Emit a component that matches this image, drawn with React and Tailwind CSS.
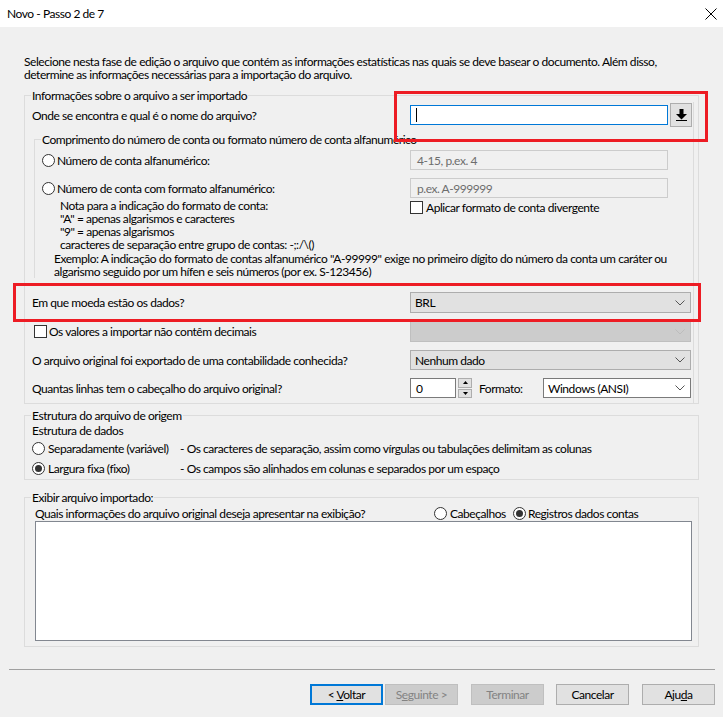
import React from 'react';

function Radio({ checked }) {
  return (
    <span className="w-[13px] h-[13px] shrink-0 rounded-full border border-[#333333] bg-white flex items-center justify-center">
      {checked && <span className="w-[7px] h-[7px] rounded-full bg-[#333333]" />}
    </span>
  );
}

function Checkbox() {
  return <span className="w-[13px] h-[13px] shrink-0 border border-[#333333] bg-white" />;
}

function Chevron({ light }) {
  return (
    <svg width="10" height="6" viewBox="0 0 10 6" className="shrink-0">
      <polyline points="0.5,0.5 5,5 9.5,0.5" fill="none" stroke={light ? '#bdbdbd' : '#555555'} strokeWidth="1" />
    </svg>
  );
}

function Combo({ text, variant, width = 'w-[281px]', height = 'h-[21px]' }) {
  // variant: normal | disabled | white
  const look =
    variant === 'disabled'
      ? 'bg-[#cccccc] border-[#bfbfbf]'
      : variant === 'white'
      ? 'bg-white border-[#7a7a7a]'
      : 'bg-[#e1e1e1] border-[#adadad]';
  return (
    <div className={`${width} ${height} ${look} border flex items-center justify-between pl-[4px] pr-[5px]`}>
      <span>{text}</span>
      <Chevron light={variant === 'disabled'} />
    </div>
  );
}

function Button({ children, kind }) {
  const look =
    kind === 'default'
      ? 'bg-[#e1e1e1] border-2 border-[#0078d7] text-black'
      : kind === 'disabled'
      ? 'bg-[#cccccc] border border-[#bfbfbf] text-[#838383]'
      : 'bg-[#e1e1e1] border border-[#adadad] text-black';
  return <div className={`w-[73px] h-[21px] flex items-center justify-center ${look}`}>{children}</div>;
}

export default function App() {
  return (
    <div className="relative w-[723px] h-[717px] overflow-hidden bg-[#f0f0f0] text-black text-[12px] leading-[13px] tracking-[-0.45px] font-['Lato',sans-serif]">
      {/* title bar */}
      <div className="h-[27px] bg-white flex items-center justify-between pl-[7px] pr-[6px]">
        <span>Novo - Passo 2 de 7</span>
        <svg width="12" height="12" viewBox="0 0 12 12">
          <path d="M0.5 0.5 L11.5 11.5 M11.5 0.5 L0.5 11.5" stroke="#000" strokeWidth="1" />
        </svg>
      </div>

      {/* intro */}
      <div className="mt-[28px] ml-[24px] whitespace-nowrap">
        <div>Selecione nesta fase de edição o arquivo que contém as informações estatísticas nas quais se deve basear o documento. Além disso,</div>
        <div>determine as informações necessárias para a importação do arquivo.</div>
      </div>

      {/* group 1 */}
      <fieldset className="mt-[8px] ml-[24px] w-[675px] border border-[#dcdcdc]">
        <legend className="ml-[6px] px-[1px]">Informações sobre o arquivo a ser importado</legend>
        <div className="w-[669px] border-r border-[#dcdcdc] pl-[7px] pb-[5px] flex flex-col whitespace-nowrap">
          <div className="mt-[1px] h-[24px] flex items-center">
            <span className="w-[378px]">Onde se encontra e qual é o nome do arquivo?</span>
            <div className="w-[258px] h-[20px] border border-[#0078d7] bg-white flex items-center pl-[5px]">
              <span className="w-px h-[14px] bg-black" />
            </div>
            <div className="ml-[2px] w-[22px] h-[24px] bg-[#e1e1e1] border border-[#adadad] flex items-center justify-center">
              <svg width="11" height="12" viewBox="0 0 11 12">
                <rect x="3.5" y="0" width="4" height="5" fill="#000" />
                <polygon points="0,5 11,5 5.5,10.5" fill="#000" />
                <rect x="0" y="11" width="11" height="1" fill="#000" />
              </svg>
            </div>
          </div>

          <fieldset className="mt-[6px] ml-[2px] w-[657px] border-t border-l border-[#dcdcdc]">
            <legend className="ml-[6px] px-[1px]">Comprimento do número de conta ou formato número de conta alfanumérico</legend>
            <div className="pl-[7px] flex flex-col">
              <div className="mt-[4px] h-[20px] flex items-center">
                <div className="w-[368px] flex items-center gap-[2px]">
                  <Radio />
                  <span>Número de conta alfanumérico:</span>
                </div>
                <div className="w-[258px] h-[20px] border border-[#cccccc] bg-[#f0f0f0] text-[#6d6d6d] flex items-center pl-[6px]">4-15, p.ex. 4</div>
              </div>
              <div className="mt-[8px] h-[20px] flex items-center">
                <div className="w-[368px] flex items-center gap-[2px]">
                  <Radio />
                  <span>Número de conta com formato alfanumérico:</span>
                </div>
                <div className="w-[258px] h-[20px] border border-[#cccccc] bg-[#f0f0f0] text-[#6d6d6d] flex items-center pl-[6px]">p.ex. A-999999</div>
              </div>
              <div className="flex">
                <div className="w-[368px] pl-[18px] pt-[1px]">
                  <div>Nota para a indicação do formato de conta:</div>
                  <div>"A" = apenas algarismos e caracteres</div>
                  <div>"9" = apenas algarismos</div>
                  <div>caracteres de separação entre grupo de contas: -;:/\()</div>
                </div>
                <div className="mt-[3px] h-[13px] flex items-center gap-[3px]">
                  <Checkbox />
                  <span>Aplicar formato de conta divergente</span>
                </div>
              </div>
              <div className="mt-[1px] pl-[12px]">
                <div>Exemplo: A indicação do formato de contas alfanumérico "A-99999" exige no primeiro dígito do número da conta um caráter ou</div>
                <div>algarismo seguido por um hífen e seis números (por ex. S-123456)</div>
              </div>
            </div>
          </fieldset>

          <div className="mt-[14px] h-[21px] flex items-center">
            <span className="w-[378px]">Em que moeda estão os dados?</span>
            <Combo text="BRL" />
          </div>
          <div className="mt-[8px] h-[21px] flex items-center">
            <div className="w-[378px] flex items-center gap-[2px] pl-[2px]">
              <Checkbox />
              <span>Os valores a importar não contêm decimais</span>
            </div>
            <Combo text="" variant="disabled" />
          </div>
          <div className="mt-[8px] h-[20px] flex items-center">
            <span className="w-[378px]">O arquivo original foi exportado de uma contabilidade conhecida?</span>
            <Combo text="Nenhum dado" height="h-[20px]" />
          </div>
          <div className="mt-[8px] h-[20px] flex items-center">
            <span className="w-[378px]">Quantas linhas tem o cabeçalho do arquivo original?</span>
            <div className="w-[46px] h-[20px] border border-[#7a7a7a] bg-white flex items-center pl-[5px]">0</div>
            <div className="ml-[2px] w-[14px] h-[20px] flex flex-col gap-px">
              <div className="flex-1 bg-[#e1e1e1] border border-[#adadad] flex items-center justify-center">
                <svg width="5" height="3" viewBox="0 0 5 3"><polygon points="0,3 5,3 2.5,0" fill="#000" /></svg>
              </div>
              <div className="flex-1 bg-[#e1e1e1] border border-[#adadad] flex items-center justify-center">
                <svg width="5" height="3" viewBox="0 0 5 3"><polygon points="0,0 5,0 2.5,3" fill="#000" /></svg>
              </div>
            </div>
            <span className="ml-[7px] w-[64px]">Formato:</span>
            <Combo text="Windows (ANSI)" variant="white" width="w-[148px]" height="h-[20px]" />
          </div>
        </div>
      </fieldset>

      {/* group 2 */}
      <fieldset className="mt-[5px] ml-[24px] w-[675px] border border-[#dcdcdc]">
        <legend className="ml-[6px] px-[1px]">Estrutura do arquivo de origem</legend>
        <div className="pl-[7px] pb-[1px] flex flex-col whitespace-nowrap">
          <div className="mt-[2px]">Estrutura de dados</div>
          <div className="mt-[1px] h-[20px] flex items-center">
            <div className="w-[148px] flex items-center gap-[3px]">
              <Radio />
              <span>Separadamente (variável)</span>
            </div>
            <span>- Os caracteres de separação, assim como vírgulas ou tabulações delimitam as colunas</span>
          </div>
          <div className="h-[20px] flex items-center">
            <div className="w-[148px] flex items-center gap-[3px]">
              <Radio checked />
              <span>Largura fixa (fixo)</span>
            </div>
            <span>- Os campos são alinhados em colunas e separados por um espaço</span>
          </div>
        </div>
      </fieldset>

      {/* group 3 */}
      <fieldset className="mt-[11px] ml-[24px] w-[675px] border border-[#dcdcdc]">
        <legend className="ml-[6px] px-[1px]">Exibir arquivo importado:</legend>
        <div className="pl-[10px] pb-[5px] flex flex-col whitespace-nowrap">
          <div className="mt-[3px] h-[13px] flex items-center">
            <span className="w-[399px]">Quais informações do arquivo original deseja apresentar na exibição?</span>
            <div className="w-[79px] flex items-center gap-[3px]">
              <Radio />
              <span>Cabeçalhos</span>
            </div>
            <div className="flex items-center gap-[2px]">
              <Radio checked />
              <span>Registros dados contas</span>
            </div>
          </div>
          <div className="mt-[1px] w-[657px] h-[120px] border border-[#828790] bg-white" />
        </div>
      </fieldset>

      {/* separator + buttons */}
      <div className="mt-[22px] ml-[9px] w-[706px] h-px bg-[#a0a0a0]" />
      <div className="mt-[14px] ml-[310px] flex items-center">
        <Button kind="default">
          <span>&lt; <span className="underline">V</span>oltar</span>
        </Button>
        <div className="ml-[2px]">
          <Button kind="disabled">
            <span>S<span className="underline">e</span>guinte &gt;</span>
          </Button>
        </div>
        <div className="ml-[13px]">
          <Button kind="disabled">Terminar</Button>
        </div>
        <div className="ml-[12px]">
          <Button>Cancelar</Button>
        </div>
        <div className="ml-[13px]">
          <Button>
            <span>Aju<span className="underline">d</span>a</span>
          </Button>
        </div>
      </div>

      {/* red highlight annotations */}
      <div className="absolute left-[394px] top-[91px] w-[314px] h-[51px] border-[3px] border-[#ed1c24]" />
      <div className="absolute left-[13px] top-[283px] w-[688px] h-[39px] border-[3px] border-[#ed1c24]" />
    </div>
  );
}
